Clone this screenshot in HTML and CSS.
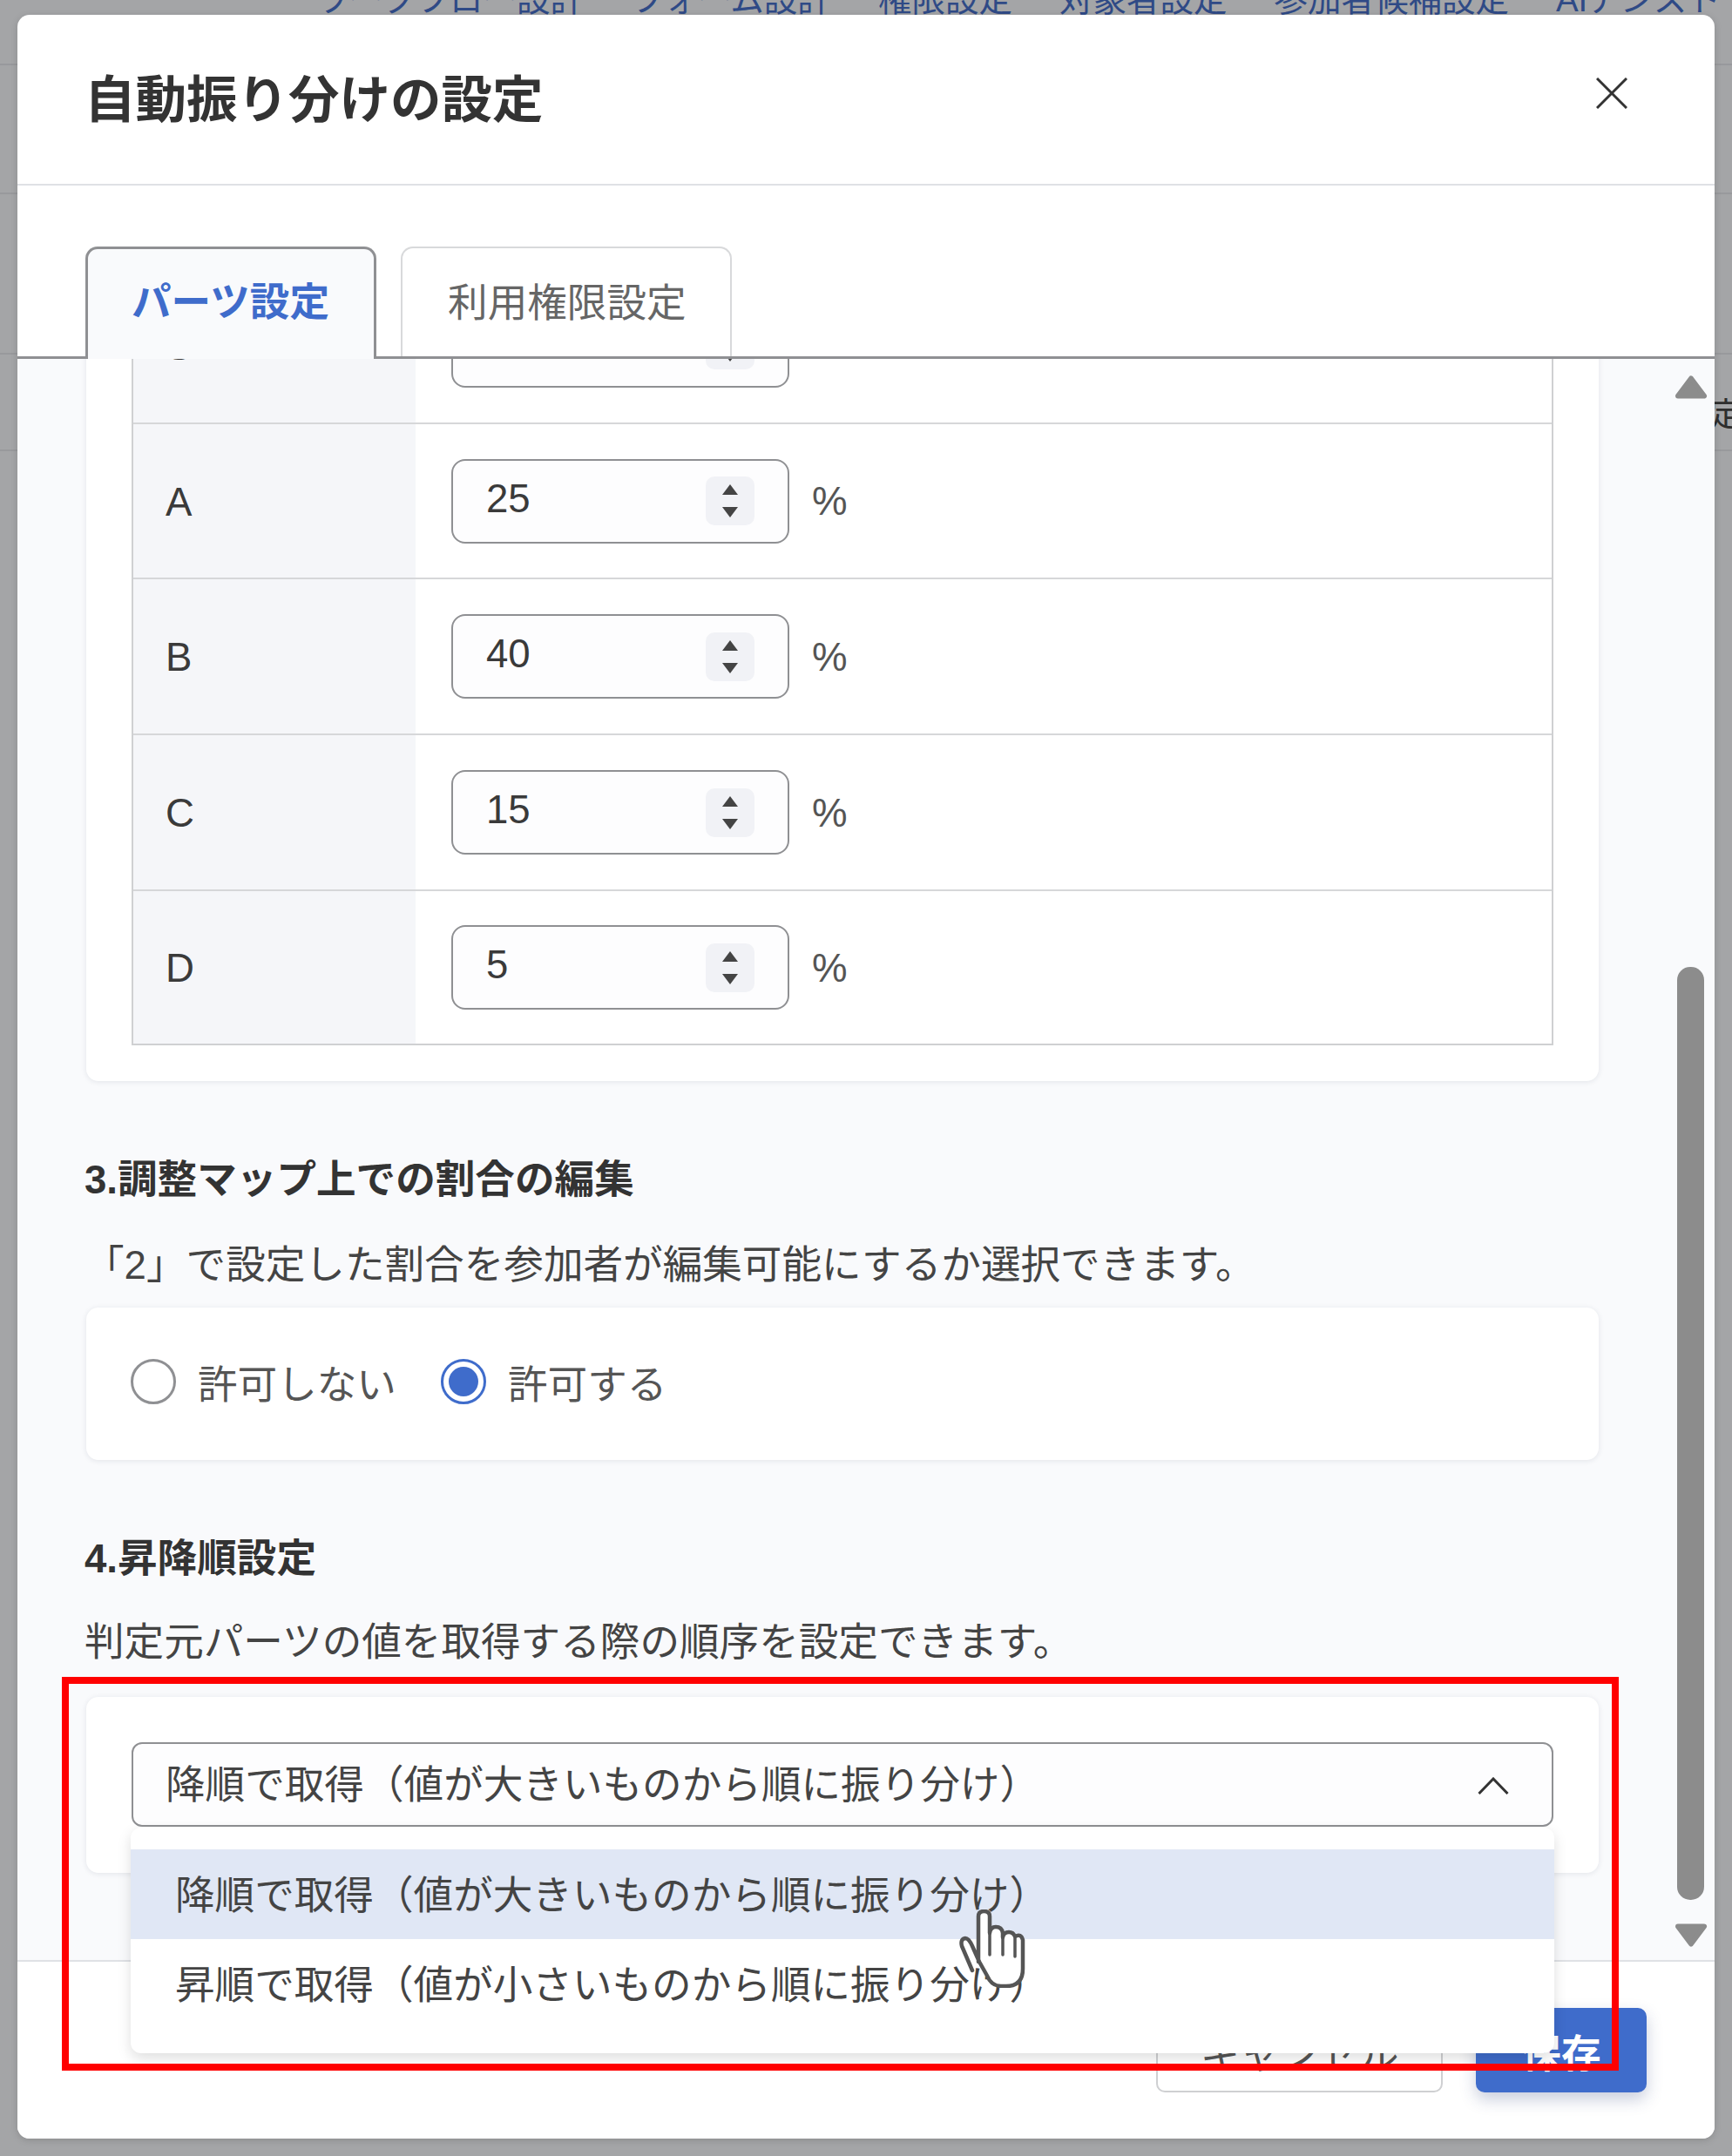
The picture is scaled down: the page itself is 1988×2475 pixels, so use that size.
FILE: index.html
```html
<!DOCTYPE html>
<html lang="ja">
<head>
<meta charset="utf-8">
<title>自動振り分けの設定</title>
<link rel="stylesheet" href="styles.css">
</head>
<body>
<div class="backdrop">
  <div class="bg-row bg-row-nav">
    <nav class="nav">
      <span>ワークフロー設計</span><span>フォーム設計</span><span>権限設定</span><span>対象者設定</span><span>参加者候補設定</span><span>AIアシスト</span>
    </nav>
  </div>
  <div class="bg-row bg-row-2"></div>
  <div class="bg-row bg-row-3"></div>
  <div class="bg-row bg-row-4"><span class="bg-glyph">定</span></div>
</div>

<div class="modal">
  <header class="modal-head">
    <h1 class="modal-title">自動振り分けの設定</h1>
    <svg class="close" viewBox="0 0 36 36" width="36" height="36"><path d="M1 1L35 35M35 1L1 35" fill="none" stroke="#333" stroke-width="3"/></svg>
  </header>
  <div class="tabs">
    <div class="tab tab-active">パーツ設定</div>
    <div class="tab">利用権限設定</div>
  </div>
  <div class="scroll">
    <div class="scroll-inner">
      <section class="card card-table">
        <div class="table">
          <div class="row"><div class="label">S</div><div class="value"><div class="num"><span>15</span><i class="spin"><b class="up"></b><b class="down"></b></i></div><span class="pct">%</span></div></div>
          <div class="row"><div class="label">A</div><div class="value"><div class="num"><span>25</span><i class="spin"><b class="up"></b><b class="down"></b></i></div><span class="pct">%</span></div></div>
          <div class="row"><div class="label">B</div><div class="value"><div class="num"><span>40</span><i class="spin"><b class="up"></b><b class="down"></b></i></div><span class="pct">%</span></div></div>
          <div class="row"><div class="label">C</div><div class="value"><div class="num"><span>15</span><i class="spin"><b class="up"></b><b class="down"></b></i></div><span class="pct">%</span></div></div>
          <div class="row row-last"><div class="label">D</div><div class="value"><div class="num"><span>5</span><i class="spin"><b class="up"></b><b class="down"></b></i></div><span class="pct">%</span></div></div>
        </div>
      </section>

      <h2 class="sec-title">3.調整マップ上での割合の編集</h2>
      <p class="sec-desc desc-3">「2」で設定した割合を参加者が編集可能にするか選択できます。</p>
      <section class="card card-radio">
        <span class="radio"></span><span class="radio-text">許可しない</span>
        <span class="radio radio-on"></span><span class="radio-text">許可する</span>
      </section>

      <h2 class="sec-title">4.昇降順設定</h2>
      <p class="sec-desc desc-4">判定元パーツの値を取得する際の順序を設定できます。</p>
      <section class="card card-select">
        <div class="select">
          <span>降順で取得（値が大きいものから順に振り分け）</span>
          <svg class="chev" viewBox="0 0 36 20" width="36" height="20"><path d="M1.5 19L18 2L34.5 19" fill="none" stroke="#333" stroke-width="3"/></svg>
        </div>
      </section>
    </div>
    <div class="scrollbar">
      <svg class="sb-arrow" viewBox="0 0 38 28" width="38" height="28"><path d="M19 4.500L34 24.500H4Z" fill="#8c8c8c" stroke="#8c8c8c" stroke-width="6" stroke-linejoin="round"/></svg>
      <div class="sb-thumb"></div>
      <svg class="sb-arrow sb-arrow-down" viewBox="0 0 38 28" width="38" height="28"><path d="M19 24.500L34 4.500H4Z" fill="#8c8c8c" stroke="#8c8c8c" stroke-width="6" stroke-linejoin="round"/></svg>
    </div>
  </div>
  <footer class="modal-foot">
    <button class="btn btn-cancel">キャンセル</button>
    <button class="btn btn-save">保存</button>
  </footer>
  <div class="dropdown">
    <div class="opt opt-hover">降順で取得（値が大きいものから順に振り分け）</div>
    <div class="opt">昇順で取得（値が小さいものから順に振り分け）</div>
  </div>
</div>

<svg class="hand" viewBox="0 0 77 90" width="77" height="90">
  <path d="M23 60V8Q23 2 29.500 2Q36 2 36 8V27Q37 20 43 20Q50 20 51 27V32Q52 26 58 26Q63 26 65 31Q72 27 74 35V68Q74 88 55 88H49Q38 88 33 76L24 60L16 42Q12 33 8 33Q2 34 4 42L16 70" fill="#fff" stroke="#555" stroke-width="4.500" stroke-linejoin="round" stroke-linecap="round"/>
  <path d="M36 27V52M51 30V52M65 31V54" fill="none" stroke="#555" stroke-width="3.500" stroke-linecap="round"/>
</svg>
<div class="annotation"></div>
</body>
</html>
```

FILE: styles.css
```css
* { box-sizing: border-box; }
html, body { margin: 0; padding: 0; height: 100%; }
body {
  position: relative;
  width: 1988px;
  height: 2475px;
  overflow: hidden;
  background: #a4a5a7;
  font-family: "Liberation Sans", "Noto Sans CJK JP", sans-serif;
  font-size: 45.600px;
  color: #3a3a3a;
}

/* dimmed page behind the dialog */
.backdrop { display: flex; flex-direction: column; }
.bg-row { border-bottom: 2px solid #98999c; }
.bg-row-nav { height: 75px; }
.bg-row-2 { height: 148px; }
.bg-row-3 { height: 184px; }
.bg-row-4 { height: 111px; display: flex; justify-content: flex-end; padding-top: 46px; }
.bg-glyph { font-size: 38px; line-height: 46px; margin-right: -12px; color: #2e2e2e; }
.nav {
  display: flex;
  gap: 54px;
  margin-top: -32px;
  padding-left: 362px;
  font-size: 38.500px;
  line-height: 64px;
  color: #2f4a86;
  white-space: nowrap;
}

/* dialog */
.modal {
  position: absolute;
  left: 20px;
  top: 17px;
  width: 1948px;
  height: 2438px;
  display: flex;
  flex-direction: column;
  background: #fff;
  border-radius: 14px;
  box-shadow: 0 2px 8px rgba(0, 0, 0, .15);
  overflow: hidden;
}
.modal-head {
  height: 196px;
  flex: none;
  display: flex;
  justify-content: space-between;
  align-items: flex-start;
  padding: 0 100px 0 77px;
  border-bottom: 2px solid #dfe1e5;
}
.modal-title {
  margin: 56px 0 0;
  font-size: 58.500px;
  line-height: 84px;
  font-weight: 700;
  color: #333;
}
.close { margin-top: 72px; }

.tabs {
  height: 199px;
  flex: none;
  display: flex;
  align-items: flex-end;
  gap: 28px;
  padding-left: 78px;
  border-bottom: 3px solid #8f9093;
}
.tab {
  height: 126px;
  padding: 3px 50px 0 52px;
  display: flex;
  align-items: center;
  border: 2px solid #d8d9db;
  border-bottom: 0;
  border-radius: 14px 14px 0 0;
  color: #666;
  line-height: 1;
  position: relative;
}
.tab-active {
  height: 129px;
  margin-bottom: -3px;
  padding: 0 51px 3px 50px;
  background: #f9fafc;
  border: 3px solid #8f9093;
  border-bottom: 0;
  color: #3f6ccb;
  font-weight: 700;
}

.scroll {
  flex: 1 1 0;
  min-height: 0;
  position: relative;
  overflow: hidden;
  background: #f9fafc;
  border-bottom: 2px solid #dfe1e5;
}
.scroll-inner { margin-top: -156px; padding-left: 79px; }
.card {
  width: 1736px;
  background: #fff;
  border-radius: 14px;
  box-shadow: 0 1px 6px rgba(30, 40, 70, .1);
}
.card-table { padding: 51px 52px 41px; }
.table { border: 2px solid #cfd0d2; border-top: 0; }
.row { display: flex; height: 179px; border-bottom: 2px solid #d6d7d9; }
.row:first-child { height: 180px; }
.row:nth-child(2) { height: 178px; }
.row-last { height: 175px; border-bottom: 0; }
.label {
  width: 324px;
  flex: none;
  display: flex;
  align-items: center;
  padding: 3px 0 0 37px;
  background: #f5f6f9;
}
.value { flex: 1; display: flex; align-items: center; padding-left: 41px; }
.num {
  width: 388px;
  height: 97px;
  display: flex;
  align-items: center;
  justify-content: space-between;
  padding: 0 38px;
  border: 2.500px solid #8f9093;
  border-radius: 16px;
  background: #fdfdfe;
}
.num span { margin-top: -5px; }
.spin {
  width: 56px;
  height: 56px;
  display: flex;
  flex-direction: column;
  align-items: center;
  justify-content: center;
  gap: 14px;
  border-radius: 10px;
  background: #f1f2f6;
}
.up, .down { width: 0; height: 0; border-left: 9px solid transparent; border-right: 9px solid transparent; }
.up { border-bottom: 12px solid #444; }
.down { border-top: 12px solid #444; }
.pct { margin: 2px 0 0 26px; color: #555; }

.sec-title {
  margin: 82px 0 0 -2px;
  font-size: 45.600px;
  line-height: 64px;
  font-weight: 700;
  color: #333;
}
.sec-desc { margin: 0 0 0 -2px; line-height: 64px; color: #444; }
.desc-3 { margin-top: 34px; margin-bottom: 16px; }
.desc-4 { margin-top: 32px; margin-bottom: 30px; }

.card-radio { height: 175px; display: flex; align-items: center; padding: 0 0 5px 51px; }
.radio {
  width: 52px;
  height: 52px;
  flex: none;
  border: 3.500px solid #8f9093;
  border-radius: 50%;
  background: #fff;
}
.radio-on { border-color: #3f6ccb; padding: 6px; background: #3f6ccb content-box; }
.radio-text { margin: 0 51px 0 25px; color: #555; }

.card-select { height: 202px; padding: 52px 52px 0; }
.select {
  height: 97px;
  display: flex;
  align-items: center;
  justify-content: space-between;
  padding: 0 49px 0 37px;
  border: 2.500px solid #8f9093;
  border-radius: 12px;
  background: #fdfdfe;
  color: #444;
}
.select span { margin-top: -7px; }
.chev { margin-top: 2px; }

.scrollbar {
  position: absolute;
  top: 0;
  bottom: 0;
  left: 1902px;
  width: 38px;
}
.sb-arrow { position: absolute; left: 0; top: 18px; }
.sb-arrow-down { top: 1795px; }
.sb-thumb {
  position: absolute;
  left: 3px;
  top: 698px;
  width: 31px;
  height: 1071px;
  border-radius: 15px;
  background: #8c8c8c;
}

.modal-foot {
  flex: none;
  height: 203px;
  display: flex;
  justify-content: flex-end;
  gap: 38px;
  padding: 53px 78px 0 0;
  background: #fff;
}
.btn {
  height: 97px;
  font: inherit;
  border-radius: 10px;
  padding: 0;
}
.btn-cancel { width: 329px; background: #fff; border: 2px solid #cfd0d2; color: #555; }
.btn-save {
  width: 196px;
  border: 0;
  background: #3f6ccb;
  color: #fff;
  font-weight: 700;
  box-shadow: 0 8px 18px rgba(40, 60, 120, .25);
}

.dropdown {
  position: absolute;
  left: 130px;
  top: 2081px;
  width: 1634px;
  height: 259px;
  padding-top: 25px;
  background: #fff;
  border-radius: 12px;
  box-shadow: 0 6px 16px rgba(0, 0, 0, .13);
  color: #444;
}
.opt { height: 103px; padding-left: 51px; line-height: 108px; }
.opt-hover { background: #e0e7f5; }

/* annotation drawn over the screenshot */
.annotation {
  position: absolute;
  left: 71px;
  top: 1925px;
  width: 1787px;
  height: 452px;
  border: 8px solid #f00;
}
.hand { position: absolute; left: 1100px; top: 2192px; }
```
